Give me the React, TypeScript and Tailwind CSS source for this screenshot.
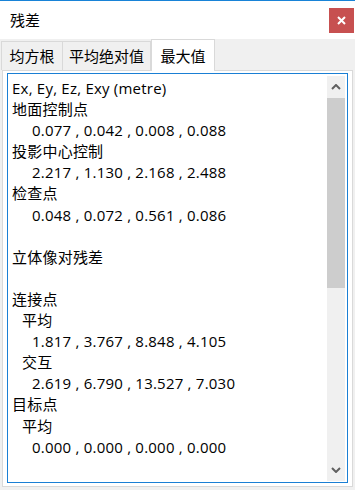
import React from "react";

const lines: [number, string][] = [
  [0, "Ex, Ey, Ez, Exy (metre)"],
  [0, "地面控制点"],
  [2, "0.077 , 0.042 , 0.008 , 0.088"],
  [0, "投影中心控制"],
  [2, "2.217 , 1.130 , 2.168 , 2.488"],
  [0, "检查点"],
  [2, "0.048 , 0.072 , 0.561 , 0.086"],
  [0, ""],
  [0, "立体像对残差"],
  [0, ""],
  [0, "连接点"],
  [1, "平均"],
  [2, "1.817 , 3.767 , 8.848 , 4.105"],
  [1, "交互"],
  [2, "2.619 , 6.790 , 13.527 , 7.030"],
  [0, "目标点"],
  [1, "平均"],
  [2, "0.000 , 0.000 , 0.000 , 0.000"],
];

const font = {
  fontFamily: "'Open Sans', 'Noto Sans CJK SC', sans-serif",
};

export default function App() {
  return (
    <div
      className="w-[355px] h-[490px] bg-[#f0f0f0] flex flex-col overflow-hidden text-black"
      style={font}
    >
      <div className="h-px bg-[#1883d7]" />
      <div className="h-[38px] bg-white flex items-center justify-between">
        <span className="pl-[10px] text-[15px] leading-none">残差</span>
        <div className="w-[25px] h-[25px] bg-[#c75050] mr-[1px] flex items-center justify-center">
          <svg width="9" height="9" viewBox="0 0 9 9">
            <path d="M1 1 L8 8 M8 1 L1 8" stroke="white" strokeWidth="2" />
          </svg>
        </div>
      </div>
      <div className="h-[31px] flex items-end pl-[1px]">
        <div className="h-[29px] w-[62px] border border-b-0 border-[#d9d9d9] bg-[#f0f0f0] flex items-center justify-center text-[15px]">
          均方根
        </div>
        <div className="h-[29px] w-[88px] border border-b-0 border-l-0 border-[#d9d9d9] bg-[#f0f0f0] flex items-center justify-center text-[15px]">
          平均绝对值
        </div>
        <div className="h-[32px] w-[64px] -mb-px relative z-10 border border-b-0 border-[#d9d9d9] bg-white flex items-start justify-center pt-[5px] text-[15px]">
          最大值
        </div>
      </div>
      <div className="mx-[2px] h-[417px] bg-white border border-[#d9d9d9] flex flex-col pl-[4px] pr-[4px] pt-[2px] pb-[3px]">
        <div className="flex-1 border border-[#1a7fd4] flex pt-[2px] pr-[2px] pb-[1px]">
          <div className="flex-1 pl-[4px] pt-[2px] text-[15px] leading-[21.1px] tracking-[0.22px] overflow-hidden">
            {lines.map(([ind, t], i) => (
              <div
                key={i}
                className={
                  "h-[21.1px] whitespace-pre " +
                  (ind === 2 ? "pl-[20px]" : ind === 1 ? "pl-[10px]" : "")
                }
              >
                {t}
              </div>
            ))}
          </div>
          <div className="w-[18px] bg-[#f0f0f0] flex flex-col">
            <div className="h-[22px] flex items-center justify-center">
              <svg width="10" height="6" viewBox="0 0 10 6">
                <path d="M1 5 L5 1 L9 5" stroke="#606060" strokeWidth="2" fill="none" />
              </svg>
            </div>
            <div className="h-[190px] bg-[#cdcdcd]" />
            <div className="flex-1" />
            <div className="h-[22px] flex items-center justify-center">
              <svg width="10" height="6" viewBox="0 0 10 6">
                <path d="M1 1 L5 5 L9 1" stroke="#606060" strokeWidth="2" fill="none" />
              </svg>
            </div>
          </div>
        </div>
      </div>
    </div>
  );
}
